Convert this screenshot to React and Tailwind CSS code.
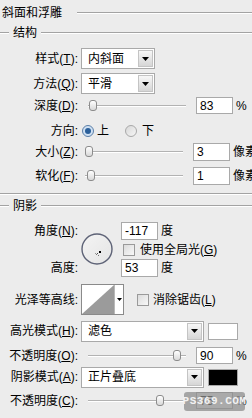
import React from 'react';

const Label = ({ children, className = '' }) => (
  <div className={`w-[78px] shrink-0 text-right whitespace-nowrap ${className}`}>{children}</div>
);

const U = ({ children }) => <span className="underline underline-offset-1">{children}</span>;

const Tri = () => (
  <svg width="7" height="4" viewBox="0 0 7 4">
    <path d="M0 0h7L3.5 4z" fill="#000" />
  </svg>
);

const Select = ({ value, className }) => (
  <div className={`flex h-[21px] border border-[#a9a9a9] bg-white ${className}`}>
    <div className="flex flex-1 items-center pl-[6px]">{value}</div>
    <div className="m-[1px] flex w-[15px] items-center justify-center border border-[#c4c4c4] bg-gradient-to-b from-[#f7f7f7] to-[#d6d6d6]">
      <Tri />
    </div>
  </div>
);

const Field = ({ value, className = 'h-[18px]' }) => (
  <div className={`flex w-[37px] shrink-0 items-center border border-[#a9a9a9] bg-white pl-[3px] ${className}`}>
    {value}
  </div>
);

// thin etched track with a little tab thumb
const Slider = ({ at }) => (
  <div className="relative ml-[7px] mr-[10px] h-[2px] w-[98px] shrink-0 border-t border-[#b2b2b2] bg-white">
    <div
      className="absolute top-[-6px] h-[11px] w-[8px] rounded-[3px] border border-[#8c8c8c] bg-gradient-to-b from-white to-[#d8d8d8]"
      style={{ left: at }}
    />
  </div>
);

const Rule = ({ className = '' }) => (
  <div className={`h-[2px] border-t border-[#a3a3a3] bg-white ${className}`} />
);

const Box = ({ checked }) => (
  <div className="h-[12px] w-[12px] shrink-0 border border-[#9a9a9a] bg-gradient-to-br from-[#dcdcdc] to-[#f8f8f8]">
    {checked && <div className="m-[2px] h-[6px] w-[6px] bg-black" />}
  </div>
);

const Radio = ({ on }) =>
  on ? (
    <div className="flex h-[12px] w-[12px] shrink-0 items-center justify-center rounded-full border border-[#5b7fa8] bg-[#cfe0f2]">
      <div className="h-[6px] w-[6px] rounded-full bg-[#2a5f9a]" />
    </div>
  ) : (
    <div className="h-[12px] w-[12px] shrink-0 rounded-full border border-[#a8a8a8] bg-gradient-to-br from-[#d8d8d8] to-[#f6f6f6]" />
  );

const Heading = ({ children }) => (
  <div className="flex h-[14px] items-center">
    <div className="w-[9px]"><Rule /></div>
    <div className="px-[4px]">{children}</div>
    <div className="flex-1"><Rule /></div>
  </div>
);

export default function App() {
  return (
    <div className="relative h-[418px] w-[252px] overflow-hidden bg-[#ececec] font-[Liberation_Sans,Noto_Sans_CJK_SC,sans-serif] text-[12px] leading-none text-black">
      {/* title */}
      <div className="flex h-[26px] items-center pl-[2px]">
        <div>斜面和浮雕</div>
        <div className="ml-[15px] flex-1"><Rule /></div>
      </div>

      {/* 结构 */}
      <Heading>结构</Heading>

      <div className="mt-[8px] flex h-[21px] items-center">
        <Label>样式(<U>T</U>):</Label>
        <Select value="内斜面" className="ml-[3px] w-[74px]" />
      </div>
      <div className="mt-[4px] flex h-[21px] items-center">
        <Label>方法(<U>Q</U>):</Label>
        <Select value="平滑" className="ml-[3px] w-[74px]" />
      </div>

      <div className="mt-[3px] flex h-[17px] items-center">
        <Label>深度(<U>D</U>):</Label>
        <div className="w-[3px]" />
        <Slider at={1} />
        <Field value="83" className="h-[17px]" />
        <span className="ml-[3px]">%</span>
      </div>

      <div className="mt-[10px] flex h-[14px] items-center">
        <Label>方向:</Label>
        <div className="ml-[4px]"><Radio on /></div>
        <span className="ml-[3px]">上</span>
        <div className="ml-[16px]"><Radio /></div>
        <span className="ml-[5px]">下</span>
      </div>

      <div className="mt-[5px] flex h-[18px] items-center">
        <Label>大小(<U>Z</U>):</Label>
        <div className="w-[3px]" />
        <Slider at={0} />
        <Field value="3" />
        <span className="ml-[3px] whitespace-nowrap">像素</span>
      </div>
      <div className="mt-[6px] flex h-[18px] items-center">
        <Label>软化(<U>F</U>):</Label>
        <div className="w-[3px]" />
        <Slider at={2} />
        <Field value="1" />
        <span className="ml-[3px] whitespace-nowrap">像素</span>
      </div>

      <Rule className="mt-[8px]" />

      {/* 阴影 */}
      <div className="mt-[4px]">
        <Heading>阴影</Heading>
      </div>

      <div className="mt-[9px] flex h-[55px]">
        <div className="flex w-[78px] shrink-0 flex-col justify-between py-[3px] text-right">
          <div>角度(<U>N</U>):</div>
          <div>高度:</div>
        </div>
        <div className="ml-[3px] mt-[11px] h-[32px] w-[32px]">
          <svg width="32" height="32" viewBox="0 0 32 32">
            <defs>
              <linearGradient id="dial" x1="0" y1="0" x2="1" y2="1">
                <stop offset="0" stopColor="#f4f4f4" />
                <stop offset="1" stopColor="#e4e4e4" />
              </linearGradient>
            </defs>
            <circle cx="16" cy="16" r="15" fill="url(#dial)" stroke="#5d6276" strokeWidth="1.4" />
            <rect x="18" y="18" width="2" height="2" fill="#000" />
            <rect x="16" y="20" width="1" height="1" fill="#555" />
            <rect x="15" y="21" width="1" height="1" fill="#777" />
            <rect x="17" y="22" width="1" height="1" fill="#777" />
            <rect x="14" y="20" width="1" height="1" fill="#999" />
          </svg>
        </div>
        <div className="ml-[8px] flex flex-col justify-between">
          <div className="flex items-center">
            <Field value="-117" />
            <span className="ml-[3px]">度</span>
          </div>
          <div className="flex items-center">
            <div className="ml-[2px]"><Box /></div>
            <span className="ml-[5px] whitespace-nowrap">使用全局光(<U>G</U>)</span>
          </div>
          <div className="flex items-center">
            <Field value="53" />
            <span className="ml-[3px]">度</span>
          </div>
        </div>
      </div>

      <div className="mt-[7px] flex h-[31px] items-center">
        <Label>光泽等高线:</Label>
        <div className="ml-[3px] flex h-[31px] border border-[#8a8a8a] bg-white">
          <svg width="32" height="29" viewBox="0 0 32 29">
            <rect width="32" height="29" fill="#fff" />
            <path d="M0 29L32 0V29z" fill="#9b9b9b" />
          </svg>
          <div className="flex w-[9px] items-center justify-center border-l border-[#b9b9b9]">
            <svg width="5" height="3" viewBox="0 0 5 3"><path d="M0 0h5L2.5 3z" fill="#000" /></svg>
          </div>
        </div>
        <div className="ml-[13px]"><Box /></div>
        <span className="ml-[4px] whitespace-nowrap">消除锯齿(<U>L</U>)</span>
      </div>

      <div className="mt-[6px] flex h-[20px] items-center">
        <Label>高光模式(<U>H</U>):</Label>
        <Select value="滤色" className="ml-[3px] h-[20px] w-[123px]" />
        <div className="ml-[4px] h-[17px] w-[30px] border border-[#a9a9a9] bg-white" />
      </div>

      <div className="mt-[6px] flex h-[17px] items-center">
        <Label>不透明度(<U>O</U>):</Label>
        <div className="w-[3px]" />
        <Slider at={85} />
        <Field value="90" className="h-[17px]" />
        <span className="ml-[3px]">%</span>
      </div>

      <div className="mt-[3px] flex h-[20px] items-center">
        <Label>阴影模式(<U>A</U>):</Label>
        <Select value="正片叠底" className="ml-[3px] h-[20px] w-[123px]" />
        <div className="ml-[4px] h-[17px] w-[30px] border border-[#a9a9a9] bg-black" />
      </div>

      <div className="mt-[5px] flex h-[17px] items-center">
        <Label>不透明度(<U>C</U>):</Label>
        <div className="w-[3px]" />
        <Slider at={68} />
        <Field value="75" className="h-[17px]" />
        <span className="ml-[3px]">%</span>
      </div>

      {/* watermark */}
      <div className="absolute left-[184px] top-[392px] flex h-[19px] w-[61px] items-center justify-center rounded-[3px] bg-[#8e8e8e]/75 font-[Liberation_Mono,monospace] text-[11px] font-bold tracking-[0.5px] text-[#f2f2f2]">
        PS369.COM
      </div>
    </div>
  );
}
